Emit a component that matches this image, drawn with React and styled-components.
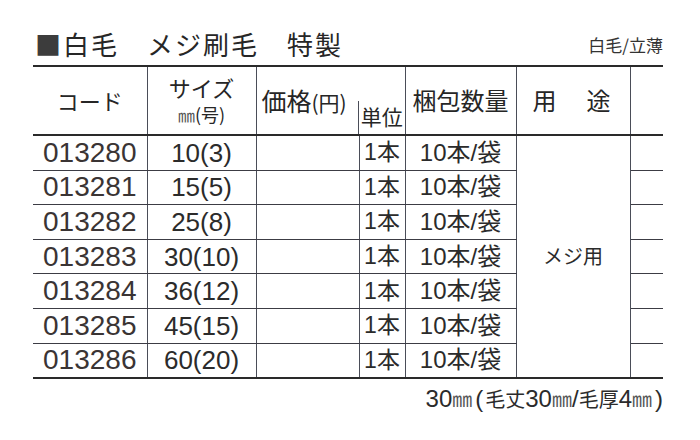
import React from 'react';
import styled, { createGlobalStyle } from 'styled-components';

const GlobalStyle = createGlobalStyle`
  html, body {
    margin: 0;
    padding: 0;
    background: #ffffff;
  }
  body {
    font-family: "Liberation Sans", "Noto Sans CJK JP", sans-serif;
    color: #2b2b2b;
  }
`;

const Page = styled.div`
  width: 700px;
  height: 440px;
  padding: 29px 0 0 33px;
  box-sizing: border-box;
`;

const Sheet = styled.div`
  width: 630px;
`;

const TitleRow = styled.div`
  display: flex;
  justify-content: space-between;
  align-items: flex-end;
  height: 30px;
  margin-bottom: 6px;
`;

const Title = styled.h1`
  margin: 0 0 0 2px;
  font-family: "Noto Sans CJK JP", sans-serif;
  font-weight: 400;
  font-size: 26px;
  line-height: 30px;
  letter-spacing: 2px;
  color: #262626;
`;

const Mark = styled.span`
  color: #3c3c3c;
`;

const Sub = styled.span`
  font-family: "Noto Sans CJK JP", sans-serif;
  font-size: 17px;
  line-height: 22px;
  color: #333;
  padding-bottom: 3px;
`;

const Table = styled.table`
  width: 630px;
  border-collapse: collapse;
  table-layout: fixed;
  border-top: 2px solid #2a2a2a;
  border-bottom: 2px solid #2a2a2a;
`;

const Head = styled.th`
  height: 67px;
  padding: 0;
  font-family: "Noto Sans CJK JP", sans-serif;
  font-weight: 400;
  font-size: ${p => p.$size || 22}px;
  line-height: 1.1;
  text-align: ${p => p.$align || 'center'};
  vertical-align: ${p => p.$valign || 'middle'};
  white-space: nowrap;
  letter-spacing: ${p => p.$spacing || 0}px;
  color: #262626;
  border-bottom: 2px solid #2a2a2a;
  border-right: ${p => (p.$open ? 'none' : '1px solid #4a4d58')};
  position: relative;
`;

const HeadLine = styled.div`
  line-height: ${p => p.$lh || 24}px;
  padding-bottom: ${p => p.$pb || 0}px;
`;

const PartLine = styled.span`
  position: absolute;
  left: -1px;
  top: 34px;
  bottom: 0;
  width: 1px;
  background: #4a4d58;
`;

const Small = styled.span`
  font-size: ${p => p.$size || 15}px;
  color: ${p => p.$color || 'inherit'};
`;

const Cell = styled.td`
  height: 33.6px;
  padding: 0;
  line-height: 1;
  text-align: center;
  vertical-align: middle;
  white-space: nowrap;
  font-size: ${p => p.$size || 23}px;
  color: ${p => p.$color || '#2b2b2b'};
  border-bottom: 1px solid #3c3c44;
  border-right: ${p => (p.$last ? 'none' : '1px solid #4a4d58')};
`;

const Footer = styled.div`
  display: flex;
  justify-content: flex-end;
  align-items: baseline;
  margin-top: 7px;
  font-size: 24px;
  line-height: 26px;
  color: #2b2b2b;
`;

const Paren = styled.span`
  margin: 0 ${p => p.$r || 0}px 0 ${p => p.$l || 0}px;
`;

const Jp = styled.span`
  font-family: "Noto Sans CJK JP", sans-serif;
  font-size: 20px;
`;

const Mm = styled.span`
  font-family: "Noto Sans CJK JP", sans-serif;
  font-size: 20px;
  color: #555;
`;

const rows = [
  ['013280', '10(3)'],
  ['013281', '15(5)'],
  ['013282', '25(8)'],
  ['013283', '30(10)'],
  ['013284', '36(12)'],
  ['013285', '45(15)'],
  ['013286', '60(20)'],
];

export default function App() {
  return (
    <Page>
      <GlobalStyle />
      <Sheet>
        <TitleRow>
          <Title>
            <Mark>■</Mark>白毛　メジ刷毛　特製
          </Title>
          <Sub>白毛/立薄</Sub>
        </TitleRow>
        <Table>
          <colgroup>
            <col style={{ width: 114 }} />
            <col style={{ width: 109 }} />
            <col style={{ width: 103 }} />
            <col style={{ width: 46 }} />
            <col style={{ width: 111 }} />
            <col style={{ width: 114 }} />
            <col style={{ width: 33 }} />
          </colgroup>
          <thead>
            <tr>
              <Head>コード</Head>
              <Head>
                <HeadLine $lh={27}>サイズ</HeadLine>
                <HeadLine $lh={22} $pb={2}>
                  <Small $size={17} $color="#555">㎜</Small>
                  <Small $size={18}>(号)</Small>
                </HeadLine>
              </Head>
              <Head $align="left" $open $size={25}>
                <span style={{ paddingLeft: 5 }}>価格</span>
                <Small $size={21}>(円)</Small>
              </Head>
              <Head $valign="bottom" $size={21}>
                <PartLine />
                <HeadLine $pb={6}>単位</HeadLine>
              </Head>
              <Head $size={24}>梱包数量</Head>
              <Head $size={24} $spacing={3}>用　途</Head>
              <Head $open />
            </tr>
          </thead>
          <tbody>
            {rows.map(([code, size], i) => (
              <tr key={code}>
                <Cell $size={28} $color="#3a3434">{code}</Cell>
                <Cell $size={26}>{size}</Cell>
                <Cell />
                <Cell>1本</Cell>
                <Cell $size={24}>10本/袋</Cell>
                {i === 0 && (
                  <Cell rowSpan={7} $size={20}>
                    メジ用
                  </Cell>
                )}
                <Cell $last />
              </tr>
            ))}
          </tbody>
        </Table>
        <Footer>
          30<Mm>㎜</Mm>
          <Paren $l={3} $r={2}>(</Paren>
          <Jp>毛丈</Jp>30<Mm>㎜</Mm>/<Jp>毛厚</Jp>4<Mm>㎜</Mm>
          <Paren $l={3}>)</Paren>
        </Footer>
      </Sheet>
    </Page>
  );
}
